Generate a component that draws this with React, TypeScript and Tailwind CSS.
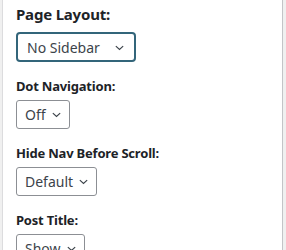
const ChevronDown = () => (
  <svg width="11" height="11" viewBox="0 0 12 12" fill="none" stroke="currentColor" strokeWidth="1.3">
    <path d="M2 4.5l4 3.6 4-3.6" />
  </svg>
);

const fields = [
  { label: "Dot Navigation:", value: "Off" },
  { label: "Hide Nav Before Scroll:", value: "Default" },
  { label: "Post Title:", value: "Show" },
];

export default function App() {
  return (
    <div className="w-[286px] h-[250px] overflow-hidden bg-[#f0f0f0] flex font-['Noto_Sans',sans-serif]">
      <div className="w-[281px] h-full bg-white border-l border-[#dcdcde] border-r border-r-[#c3c4c7] ml-[2px] pl-[13px] pt-[5px] flex flex-col gap-[16px]">
        <div className="flex flex-col items-start">
          <div className="text-[15px] leading-[18px] font-bold tracking-[-0.2px] text-[#1d2327] mb-[9px]">Page Layout:</div>
          <div className="h-[30px] w-[120px] rounded-[4px] border-2 border-[#33657a] flex items-center justify-between pl-[9px] pr-[9px] text-[14px] text-[#3c434a]">
            <span>No Sidebar</span>
            <ChevronDown />
          </div>
        </div>
        {fields.map((f) => (
          <div key={f.label} className="flex flex-col items-start">
            <div className="text-[13px] leading-[17px] font-bold tracking-[-0.2px] text-[#1d2327] mb-[5px]">{f.label}</div>
            <div className="h-[29px] rounded-[3px] border border-[#8c8f94] flex items-center gap-[5px] pl-[8px] pr-[7px] text-[14px] text-[#3c434a]">
              <span>{f.value}</span>
              <ChevronDown />
            </div>
          </div>
        ))}
      </div>
    </div>
  );
}
